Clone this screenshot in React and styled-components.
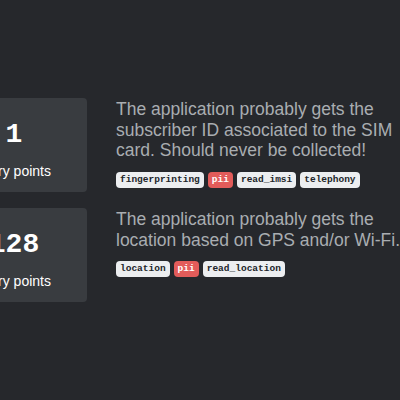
import React from "react";
import styled, { createGlobalStyle } from "styled-components";

const GlobalStyle = createGlobalStyle`
  html, body {
    margin: 0;
    padding: 0;
    background: #26282c;
    overflow: hidden;
  }
  body {
    font-family: "Liberation Sans", Arial, sans-serif;
  }
`;

const behaviors = [
  {
    count: 1,
    label: "Entry points",
    text: "The application probably gets the subscriber ID associated to the SIM card. Should never be collected!",
    tags: ["fingerprinting", "pii", "read_imsi", "telephony"],
  },
  {
    count: 128,
    label: "Entry points",
    text: "The application probably gets the location based on GPS and/or Wi-Fi.",
    tags: ["location", "pii", "read_location"],
  },
];

export default function App() {
  return (
    <>
      <GlobalStyle />
      <Page>
        {behaviors.map((b, i) => (
          <Row key={i}>
            <Card>
              <Count>{b.count}</Count>
              <Label>{b.label}</Label>
            </Card>
            <Details>
              <Description>{b.text}</Description>
              <Tags>
                {b.tags.map((t) => (
                  <Tag key={t} $danger={t === "pii"}>
                    {t}
                  </Tag>
                ))}
              </Tags>
            </Details>
          </Row>
        ))}
      </Page>
    </>
  );
}

const Page = styled.div`
  width: 480px;
  margin-left: -59px;
  padding-top: 98px;
  display: flex;
  flex-direction: column;
  gap: 16px;
`;

const Row = styled.div`
  display: flex;
  align-items: flex-start;
  gap: 29px;
`;

const Card = styled.div`
  flex-shrink: 0;
  width: 146px;
  height: 94px;
  box-sizing: border-box;
  padding: 20px 0 10px;
  background: #393c40;
  border-radius: 4px;
  display: flex;
  flex-direction: column;
  align-items: center;
  gap: 9px;
`;

const Count = styled.div`
  font-family: "Liberation Mono", monospace;
  font-weight: 700;
  font-size: 28px;
  line-height: 33.6px;
  color: #ffffff;
`;

const Label = styled.div`
  font-size: 14px;
  line-height: 21px;
  color: #ffffff;
`;

const Details = styled.div`
  flex: 1;
  padding-top: 1px;
`;

const Description = styled.p`
  margin: 0;
  font-size: 17.5px;
  line-height: 20.5px;
  color: #a9adb1;
`;

const Tags = styled.div`
  display: flex;
  flex-wrap: wrap;
  gap: 4px;
  margin-top: 11px;
`;

const Tag = styled.span`
  font-family: "Liberation Mono", monospace;
  font-weight: 700;
  font-size: 9.5px;
  line-height: 10px;
  padding: 3px 4px;
  border-radius: 4px;
  background: ${(p) => (p.$danger ? "#e25c5a" : "#eceef0")};
  color: ${(p) => (p.$danger ? "#ffffff" : "#212529")};
`;
